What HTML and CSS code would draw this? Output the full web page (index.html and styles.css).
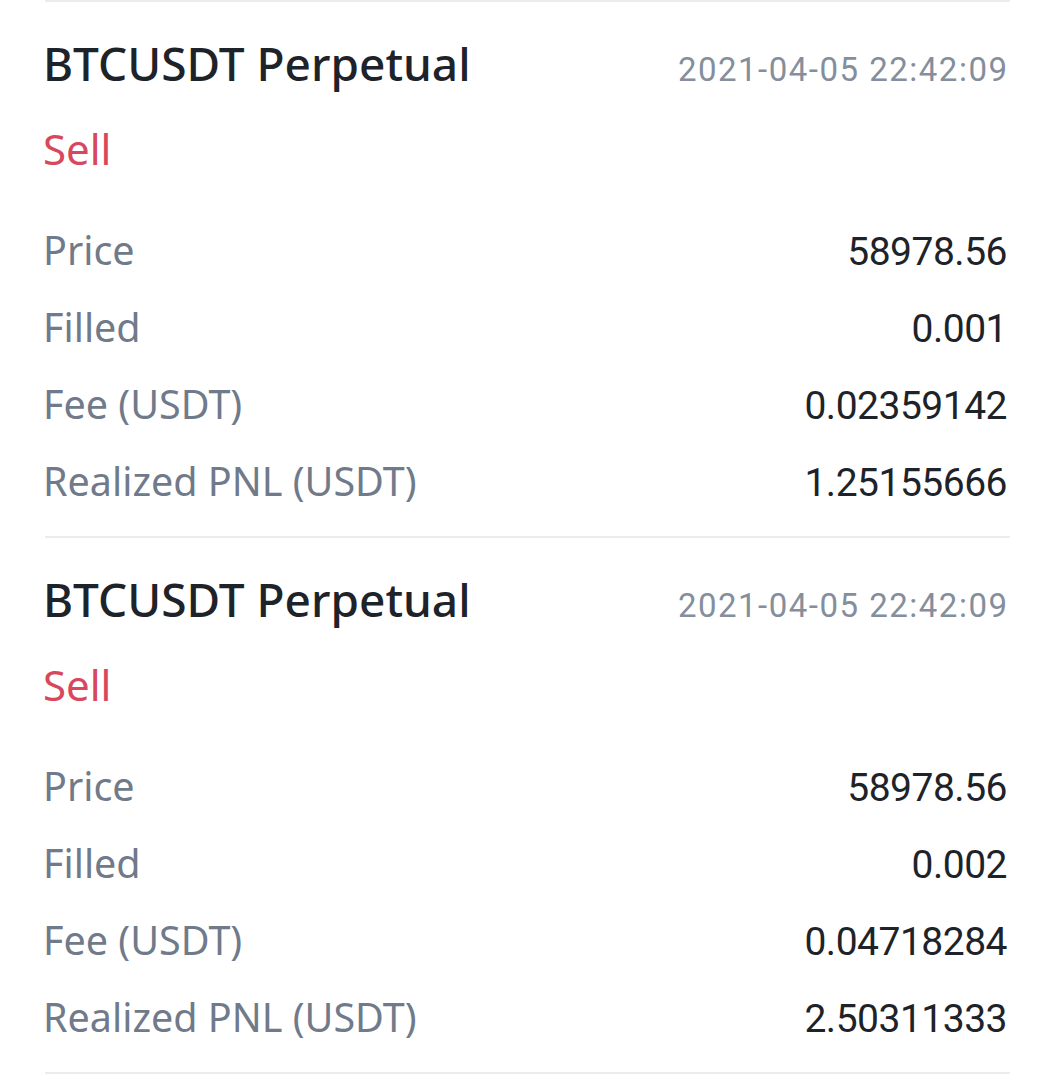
FILE: index.html
```html
<!DOCTYPE html>
<html lang="en">
<head>
    <meta charset="UTF-8">
    <title>Trade history</title>
    <link rel="stylesheet" href="styles.css">
</head>
<body>
    <div class="trade-list">
        <div class="trade">
            <div class="trade-head">
                <div class="symbol">BTCUSDT Perpetual</div>
                <div class="time">2021-04-05 22:42:09</div>
            </div>
            <div class="side sell">Sell</div>
            <div class="row"><span class="label">Price</span><span class="value">58978.56</span></div>
            <div class="row"><span class="label">Filled</span><span class="value">0.001</span></div>
            <div class="row"><span class="label">Fee (USDT)</span><span class="value">0.02359142</span></div>
            <div class="row"><span class="label">Realized PNL (USDT)</span><span class="value">1.25155666</span></div>
        </div>
        <div class="trade">
            <div class="trade-head">
                <div class="symbol">BTCUSDT Perpetual</div>
                <div class="time">2021-04-05 22:42:09</div>
            </div>
            <div class="side sell">Sell</div>
            <div class="row"><span class="label">Price</span><span class="value">58978.56</span></div>
            <div class="row"><span class="label">Filled</span><span class="value">0.002</span></div>
            <div class="row"><span class="label">Fee (USDT)</span><span class="value">0.04718284</span></div>
            <div class="row"><span class="label">Realized PNL (USDT)</span><span class="value">2.50311333</span></div>
        </div>
    </div>
</body>
</html>
```

FILE: styles.css
```css
body {
    margin: 0;
    background: #fff;
    font-family: 'Noto Sans', sans-serif;
}
.trade-list {
    padding: 0 43px 0 45px;
}
.trade {
    border-top: 2px solid #eaecef;
    padding: 29px 3px 16px 0;
}
.trade:last-child {
    border-bottom: 2px solid #eaecef;
}
.trade-head,
.side,
.row {
    margin-left: -2px;
}
.trade-head {
    display: flex;
    justify-content: space-between;
    align-items: baseline;
    line-height: 64px;
}
.symbol {
    font-size: 46px;
    font-weight: 500;
    color: #1e2329;
}
.time {
    font-family: Roboto, sans-serif;
    font-size: 33px;
    letter-spacing: 1.5px;
    margin-right: -1.5px;
    color: #848e9c;
}
.side {
    font-size: 42px;
    line-height: 64px;
    margin-top: 15px;
    margin-bottom: 31px;
}
.sell {
    color: #d9475c;
}
.row {
    display: flex;
    justify-content: space-between;
    align-items: baseline;
    height: 77px;
    line-height: 77px;
}
.label {
    font-size: 39.5px;
    color: #707a8a;
}
.value {
    font-family: Roboto, sans-serif;
    font-size: 39px;
    letter-spacing: -0.5px;
    color: #1e2329;
}
```
